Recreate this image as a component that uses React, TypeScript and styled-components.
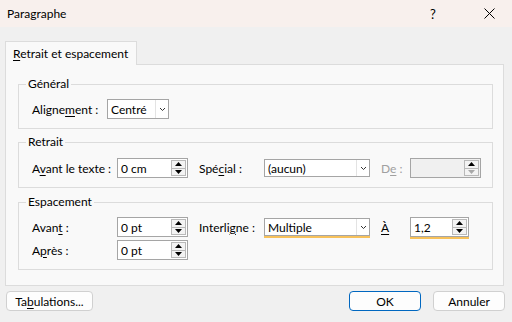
import React from "react";
import styled, { createGlobalStyle } from "styled-components";

const GlobalStyle = createGlobalStyle`
  html, body {
    margin: 0;
    background: #f0f0f0;
    font-family: "Segoe UI", Lato, "Noto Sans", sans-serif;
    font-size: 12px;
    color: #000;
  }
  * { box-sizing: border-box; }
`;

const Window = styled.div`
  width: 512px;
  height: 322px;
  display: flex;
  flex-direction: column;
  background: #f0f0f0;
  overflow: hidden;
`;

const TitleBar = styled.div`
  height: 27px;
  flex-shrink: 0;
  display: flex;
  align-items: center;
  background: #f8f0ed;
  padding-left: 7px;
`;

const Title = styled.span`
  flex: 1;
`;

const TitleButton = styled.div<{ $gap?: number }>`
  width: 46px;
  height: 27px;
  margin-right: ${(p) => p.$gap ?? 0}px;
  display: flex;
  align-items: center;
  justify-content: center;
  font-size: 13px;
`;

const Body = styled.div`
  padding: 14px 8px 0 5px;
`;

const TabStrip = styled.div`
  display: flex;
`;

const Tab = styled.div`
  height: 24px;
  padding: 0 8px 0 7px;
  display: flex;
  align-items: center;
  background: #f9f9f9;
  border: 1px solid #dcdcdc;
  border-bottom: none;
  margin-bottom: -1px;
  position: relative;
  z-index: 1;
`;

const Panel = styled.div`
  background: #f9f9f9;
  border: 1px solid #dcdcdc;
  padding: 0 10px 15px 12px;
`;

const Group = styled.div<{ $top: number }>`
  margin-top: ${(p) => p.$top}px;
  padding-bottom: 9px;
  border: 1px solid #dcdcdc;
`;

const Caption = styled.div`
  width: fit-content;
  margin: -9px 0 0 7px;
  padding: 0 2px;
  line-height: 16px;
  background: #f9f9f9;
`;

const Row = styled.div<{ $top: number }>`
  display: flex;
  align-items: center;
  height: 20px;
  margin: ${(p) => p.$top}px 0 0 13px;
`;

const Label = styled.span<{ $w: number; $gap?: number; $disabled?: boolean }>`
  width: ${(p) => p.$w}px;
  margin-left: ${(p) => p.$gap ?? 0}px;
  flex-shrink: 0;
  white-space: nowrap;
  color: ${(p) => (p.$disabled ? "#a0a0a0" : "#000")};
`;

const U = styled.u`
  text-underline-offset: 2px;
`;

const Field = styled.div<{ $w: number; $h?: number; $disabled?: boolean; $mark?: boolean }>`
  width: ${(p) => p.$w}px;
  height: ${(p) => p.$h ?? 20}px;
  flex-shrink: 0;
  display: flex;
  align-items: stretch;
  border: 1px solid #a5a5a5;
  background: ${(p) => (p.$disabled ? "#f0f0f0" : "#fff")};
  box-shadow: ${(p) => (p.$mark ? "0 2px 0 0 #f7c15a" : "none")};
`;

const Value = styled.span`
  flex: 1;
  display: flex;
  align-items: center;
  padding-left: 3px;
  white-space: nowrap;
`;

const SpinCol = styled.div`
  width: 15px;
  margin: 1px 1px 1px 0;
  display: flex;
  flex-direction: column;
  border: 1px solid #b9b9b9;
  background: #f3f3f3;
`;

const SpinHalf = styled.div<{ $dim?: boolean }>`
  flex: 1;
  display: flex;
  align-items: center;
  justify-content: center;
  color: ${(p) => (p.$dim ? "#a8a8a8" : "#000")};
  & + & {
    border-top: 1px solid #b9b9b9;
  }
`;

const DropArea = styled.div`
  width: 13px;
  display: flex;
  align-items: center;
  justify-content: center;
  border-left: 1px solid #e3e3e3;
`;

const Footer = styled.div`
  display: flex;
  padding: 5px 7px 0 6px;
`;

const Button = styled.div<{ $w: number; $primary?: boolean; $gap?: number }>`
  width: ${(p) => p.$w}px;
  height: 20px;
  margin-left: ${(p) => p.$gap ?? 0}px;
  display: flex;
  align-items: center;
  justify-content: center;
  border: 1px solid ${(p) => (p.$primary ? "#0067c0" : "#d0d0d0")};
  border-radius: 4px;
  background: #fdfdfd;
`;

const Spacer = styled.div`
  flex: 1;
`;

const Tri = ({ down }: { down?: boolean }) => (
  <svg width="7" height="4" viewBox="0 0 7 4">
    <polygon points={down ? "0,0 7,0 3.5,4" : "0,4 7,4 3.5,0"} fill="currentColor" />
  </svg>
);

const Chevron = () => (
  <svg width="7" height="5" viewBox="0 0 7 5">
    <polyline points="1,1 3.5,3.5 6,1" fill="none" stroke="#333" strokeWidth="1" />
  </svg>
);

const Spin = ({ w, value, disabled, mark }: { w: number; value: string; disabled?: boolean; mark?: boolean }) => (
  <Field $w={w} $disabled={disabled} $mark={mark}>
    <Value>{value}</Value>
    <SpinCol>
      <SpinHalf>
        <Tri />
      </SpinHalf>
      <SpinHalf $dim={disabled}>
        <Tri down />
      </SpinHalf>
    </SpinCol>
  </Field>
);

const Select = ({ w, value, h, mark }: { w: number; value: string; h?: number; mark?: boolean }) => (
  <Field $w={w} $h={h} $mark={mark}>
    <Value>{value}</Value>
    <DropArea>
      <Chevron />
    </DropArea>
  </Field>
);

export default function App() {
  return (
    <Window>
      <GlobalStyle />
      <TitleBar>
        <Title>Paragraphe</Title>
        <TitleButton $gap={10}>?</TitleButton>
        <TitleButton>
          <svg width="11" height="11" viewBox="0 0 11 11">
            <path d="M0.5 0.5 L10.5 10.5 M10.5 0.5 L0.5 10.5" stroke="#000" strokeWidth="1" />
          </svg>
        </TitleButton>
      </TitleBar>
      <Body>
        <TabStrip>
          <Tab>
            <span>
              <U>R</U>etrait et espacement
            </span>
          </Tab>
        </TabStrip>
        <Panel>
          <Group $top={19}>
            <Caption>Général</Caption>
            <Row $top={7}>
              <Label $w={75}>
                Aligne<U>m</U>ent :
              </Label>
              <Select w={62} value="Centré" />
            </Row>
          </Group>
          <Group $top={13}>
            <Caption>Retrait</Caption>
            <Row $top={8}>
              <Label $w={85}>
                A<U>v</U>ant le texte :
              </Label>
              <Spin w={71} value="0 cm" />
              <Label $w={65} $gap={11}>
                Spé<U>c</U>ial :
              </Label>
              <Select w={106} h={18} value="(aucun)" />
              <Label $w={29} $gap={11} $disabled>
                D<U>e</U> :
              </Label>
              <Spin w={71} value="" disabled />
            </Row>
          </Group>
          <Group $top={14}>
            <Caption>Espacement</Caption>
            <Row $top={7}>
              <Label $w={85}>
                Avan<U>t</U> :
              </Label>
              <Spin w={71} value="0 pt" />
              <Label $w={65} $gap={11}>
                Interli<U>g</U>ne :
              </Label>
              <Select w={106} h={18} value="Multiple" mark />
              <Label $w={29} $gap={11}>
                <U>À</U>
              </Label>
              <Spin w={59} value="1,2" mark />
            </Row>
            <Row $top={3}>
              <Label $w={85}>
                A<U>p</U>rès :
              </Label>
              <Spin w={71} value="0 pt" />
            </Row>
          </Group>
        </Panel>
      </Body>
      <Footer>
        <Button $w={87}>
          <span>
            Ta<U>b</U>ulations...
          </span>
        </Button>
        <Spacer />
        <Button $w={72} $primary>
          OK
        </Button>
        <Button $w={72} $gap={12}>
          Annuler
        </Button>
      </Footer>
    </Window>
  );
}
